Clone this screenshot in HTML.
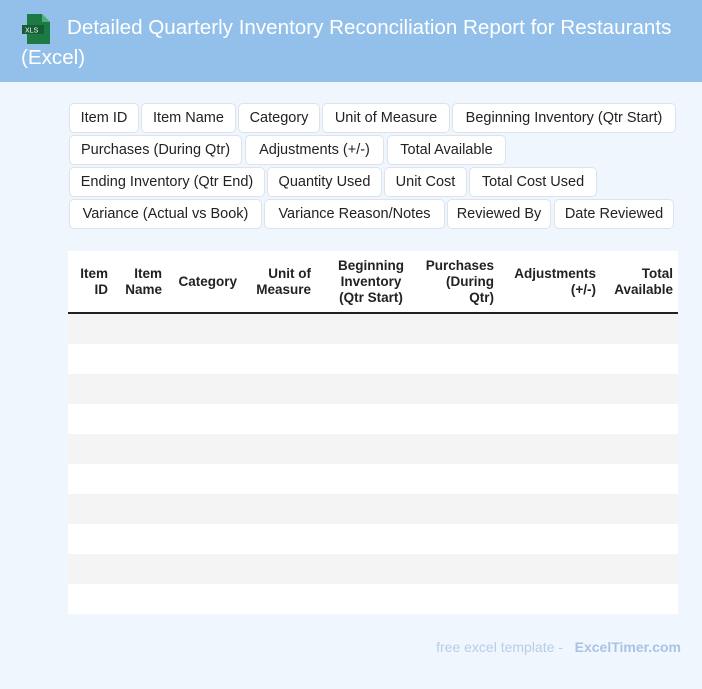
<!DOCTYPE html>
<html><head><style>
body{margin:0;width:702px;height:689px;background:#f0f6fe;font-family:"Liberation Sans",Roboto,sans-serif;position:relative;overflow:hidden}
.hd{position:absolute;left:0;top:0;width:702px;height:82px;background:#92c0ea}
.t{position:absolute;left:21px;top:13px;width:675px;color:#fff;font-size:20.6px;line-height:30px;text-indent:46px}
.c{position:absolute;border:1px solid #dde3ea;border-radius:5px;background:#fff;font-size:14.5px;line-height:28px;text-align:center;color:#222;box-sizing:border-box;height:30px}
.tb{position:absolute;left:68px;top:251px;width:610px;background:#fff}
.th{height:63px;border-bottom:2px solid #222;position:relative;box-sizing:border-box}
.th div{position:absolute;font-weight:bold;font-size:13.5px;line-height:16px;text-align:right;color:#222}
.r{height:30px}
.ft{position:absolute;right:21px;top:639px;font-size:14px;color:#b8cce6}
</style></head><body>
<div class="hd"></div>
<svg style="position:absolute;left:22px;top:14px" width="28" height="30" viewBox="0 0 28 30"><path d="M5 0h15l8 8v22H5z" fill="#1e7a45"/><path d="M20 0v8h8z" fill="#4caf78"/><rect x="0" y="11" width="22" height="9" fill="#165c34"/><text x="3" y="18.5" font-size="7" fill="#fff" font-family="Liberation Sans">XLS</text></svg>
<div class="t">Detailed Quarterly Inventory Reconciliation Report for Restaurants (Excel)</div>
<div class="c" style="left:69px;top:103px;width:70px">Item ID</div>
<div class="c" style="left:141px;top:103px;width:95px">Item Name</div>
<div class="c" style="left:238px;top:103px;width:82px">Category</div>
<div class="c" style="left:322px;top:103px;width:128px">Unit of Measure</div>
<div class="c" style="left:452px;top:103px;width:224px">Beginning Inventory (Qtr Start)</div>
<div class="c" style="left:69px;top:135px;width:173px">Purchases (During Qtr)</div>
<div class="c" style="left:245px;top:135px;width:139px">Adjustments (+/-)</div>
<div class="c" style="left:387px;top:135px;width:119px">Total Available</div>
<div class="c" style="left:69px;top:167px;width:196px">Ending Inventory (Qtr End)</div>
<div class="c" style="left:267px;top:167px;width:115px">Quantity Used</div>
<div class="c" style="left:384px;top:167px;width:83px">Unit Cost</div>
<div class="c" style="left:469px;top:167px;width:128px">Total Cost Used</div>
<div class="c" style="left:69px;top:199px;width:193px">Variance (Actual vs Book)</div>
<div class="c" style="left:264px;top:199px;width:181px">Variance Reason/Notes</div>
<div class="c" style="left:447px;top:199px;width:104px">Reviewed By</div>
<div class="c" style="left:554px;top:199px;width:120px">Date Reviewed</div>
<div class="tb">
<div class="th">
<div style="right:570px;top:15px">Item<br>ID</div>
<div style="right:516px;top:15px">Item<br>Name</div>
<div style="right:441px;top:23px">Category</div>
<div style="right:367px;top:15px">Unit of<br>Measure</div>
<div style="right:274px;top:7px;text-align:center">Beginning<br>Inventory<br>(Qtr Start)</div>
<div style="right:184px;top:7px">Purchases<br>(During<br>Qtr)</div>
<div style="right:82px;top:15px">Adjustments<br>(+/-)</div>
<div style="right:5px;top:15px">Total<br>Available</div>
</div>
<div><div class="r" style="background:#f4f4f4"></div><div class="r" style="background:#fff"></div><div class="r" style="background:#f4f4f4"></div><div class="r" style="background:#fff"></div><div class="r" style="background:#f4f4f4"></div><div class="r" style="background:#fff"></div><div class="r" style="background:#f4f4f4"></div><div class="r" style="background:#fff"></div><div class="r" style="background:#f4f4f4"></div><div class="r" style="background:#fff"></div></div>
</div>
<div class="ft">free excel template - &nbsp; <b style="color:#a9c3e6">ExcelTimer.com</b></div>
</body></html>
